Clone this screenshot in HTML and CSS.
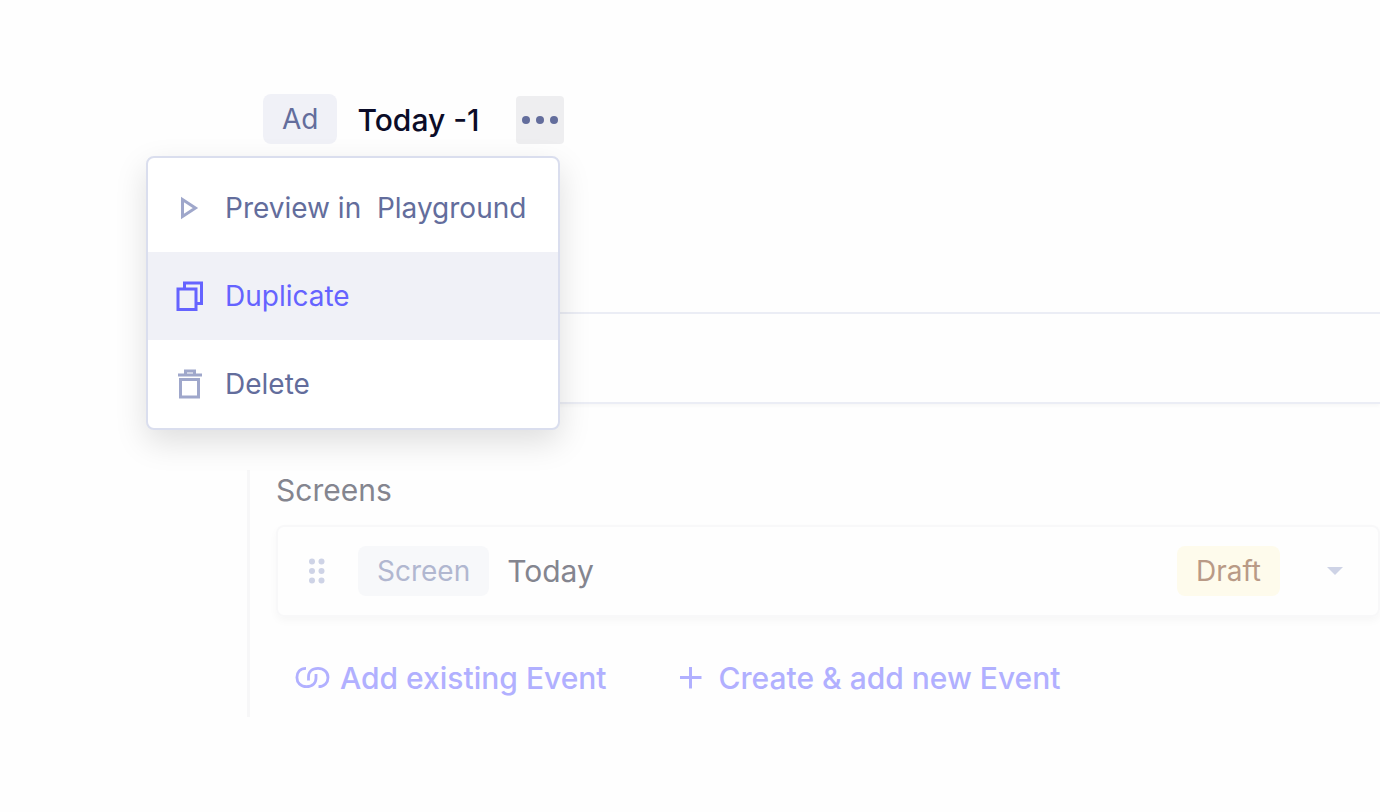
FILE: index.html
```
<!DOCTYPE html>
<html lang="en">
<head>
    <meta charset="UTF-8">
    <meta name="viewport" content="width=device-width, initial-scale=1.0">
    <title>Today -1</title>
    <link rel="stylesheet" href="styles.css">
</head>
<body>
    <header class="page-header">
        <span class="badge badge-ad">Ad</span>
        <h1 class="page-title">Today -1</h1>
        <button class="more-btn" type="button" aria-label="More actions" aria-expanded="true">
            <svg width="48" height="48" viewBox="0 0 48 48" fill="#636d9c">
                <circle cx="10" cy="24" r="4"/>
                <circle cx="24" cy="24" r="4"/>
                <circle cx="38" cy="24" r="4"/>
            </svg>
        </button>

        <div class="menu">
            <button class="menu-item" type="button">
                <svg width="28" height="32" viewBox="0 0 28 32" fill="none" stroke="#9fa7cb" stroke-width="3">
                    <path d="M6.5 7.600v16.800L19.400 16z"/>
                </svg>
                <span>Preview in &nbsp;Playground</span>
            </button>
            <button class="menu-item active" type="button">
                <svg width="28" height="32" viewBox="0 0 28 32" fill="none" stroke="#6563ff" stroke-width="3">
                    <path d="M2 9h18v20.500H2z"/>
                    <path d="M8.500 9V3H25.500v20.500H20"/>
                </svg>
                <span>Duplicate</span>
            </button>
            <button class="menu-item" type="button">
                <svg width="28" height="32" viewBox="0 0 28 32" fill="none" stroke="#9fa7cb" stroke-width="3">
                    <path d="M2 7h24M9.500 7V3h9v4M4.500 11.500h18v17.500h-18z"/>
                </svg>
                <span>Delete</span>
            </button>
        </div>
    </header>

    <div class="bar"></div>

    <section class="screens">
        <h2 class="screens-title">Screens</h2>

        <div class="card">
            <svg class="drag" width="18" height="28" viewBox="0 0 18 28" fill="#ced3e6">
                <circle cx="4" cy="4.500" r="3"/>
                <circle cx="13.500" cy="4.500" r="3"/>
                <circle cx="4" cy="14" r="3"/>
                <circle cx="13.500" cy="14" r="3"/>
                <circle cx="4" cy="23.500" r="3"/>
                <circle cx="13.500" cy="23.500" r="3"/>
            </svg>
            <span class="badge badge-screen">Screen</span>
            <h3 class="card-title">Today</h3>
            <span class="badge badge-draft">Draft</span>
            <button class="toggle" type="button" aria-label="Expand">
                <svg width="16" height="8" viewBox="0 0 16 8" fill="#ced3e6">
                    <path d="M0 0h16L8 8z"/>
                </svg>
            </button>
        </div>

        <div class="actions">
            <button class="action" type="button">
                <svg width="36" height="24" viewBox="0 0 36 24" fill="none" stroke="#b1b0ff" stroke-width="2.800">
                    <path d="M12 2.400C6 2.400 2.900 6.500 2.900 11.500S6.500 20.600 12.500 20.600C18.500 20.600 22 17 22 12V8"/>
                    <path d="M14.500 14.500V11C14.500 6 18 2.400 24 2.400S34 6.500 34 11.500S30.500 20.600 24.500 20.600"/>
                </svg>
                Add existing Event
            </button>
            <button class="action action-new" type="button">
                <svg width="24" height="24" viewBox="0 0 24 24" fill="none" stroke="#b1b0ff" stroke-width="3">
                    <path d="M11.500 1v21.500M1 11.500h21.500"/>
                </svg>
                Create &amp; add new Event
            </button>
        </div>
    </section>
</body>
</html>
```
FILE: styles.css
```
* {
    box-sizing: border-box;
}

body {
    font-family: 'Inter', 'Liberation Sans', sans-serif;
    font-size: 30px;
    line-height: 36px;
    margin: 0;
    padding: 94px 0 0 247px;
    color: #0b0c28;
    background: #fefefe;
}

h1, h2, h3 {
    margin: 0;
    font-size: 30px;
    font-weight: 400;
}

button {
    font: inherit;
    border: none;
    padding: 0;
    background: none;
    cursor: pointer;
}

svg {
    display: block;
    flex: none;
}

.badge {
    padding: 7px 19px;
    border-radius: 8px;
    font-size: 28px;
}

.badge-ad {
    color: #636d9c;
    background: #f0f1f7;
}

.badge-screen {
    color: #b1b7d0;
    background: #f7f8fa;
}

.badge-draft {
    color: #b99a86;
    background: #fefbec;
}

/* Header and its menu */
.page-header {
    position: relative;
    display: flex;
    align-items: flex-end;
    padding-left: 16px;
}

.page-title {
    margin: 0 36px 6px 20px;
    font-weight: 500;
}

.more-btn {
    border-radius: 4px;
    background: #eeeef0;
}

.menu {
    position: absolute;
    z-index: 1;
    top: 62px;
    left: -101px;
    width: 414px;
    padding-top: 6px;
    border: 2px solid #dadeee;
    border-radius: 8px;
    background: #fff;
    box-shadow: 0 12px 32px rgba(0, 0, 0, 0.13);
}

.menu-item {
    display: flex;
    align-items: center;
    gap: 21px;
    width: 100%;
    height: 88px;
    padding-left: 28px;
    font-size: 28px;
    color: #636d9c;
    white-space: nowrap;
}

.menu-item.active {
    color: #6563ff;
    background: #f0f1f7;
}

.bar {
    height: 92px;
    margin-top: 168px;
    border: 2px solid #ebedf5;
    border-width: 2px 0;
    box-shadow: 0 2px 4px rgba(0, 0, 0, 0.03);
}

/* Screens list */
.screens {
    margin-top: 66px;
    padding: 2px 0 21px 26px;
    border-left: 3px solid #f7f7f8;
}

.screens-title {
    color: #84858f;
}

.card {
    display: flex;
    align-items: center;
    height: 92px;
    margin-top: 17px;
    padding: 0 35px 0 30px;
    border: 2px solid #f8f8f9;
    border-radius: 8px;
    box-shadow: 0 4px 8px rgba(0, 0, 0, 0.03);
}

.badge-screen {
    margin-left: 32px;
}

.card-title {
    margin-left: 18px;
    color: #84858f;
}

.badge-draft {
    margin-left: auto;
}

.toggle {
    margin-left: 47px;
}

.actions {
    display: flex;
    gap: 72px;
    margin-top: 43px;
    padding-left: 18px;
}

.action {
    display: flex;
    align-items: center;
    gap: 10px;
    font-weight: 500;
    color: #b1b0ff;
}

.action-new {
    gap: 16px;
}
```
